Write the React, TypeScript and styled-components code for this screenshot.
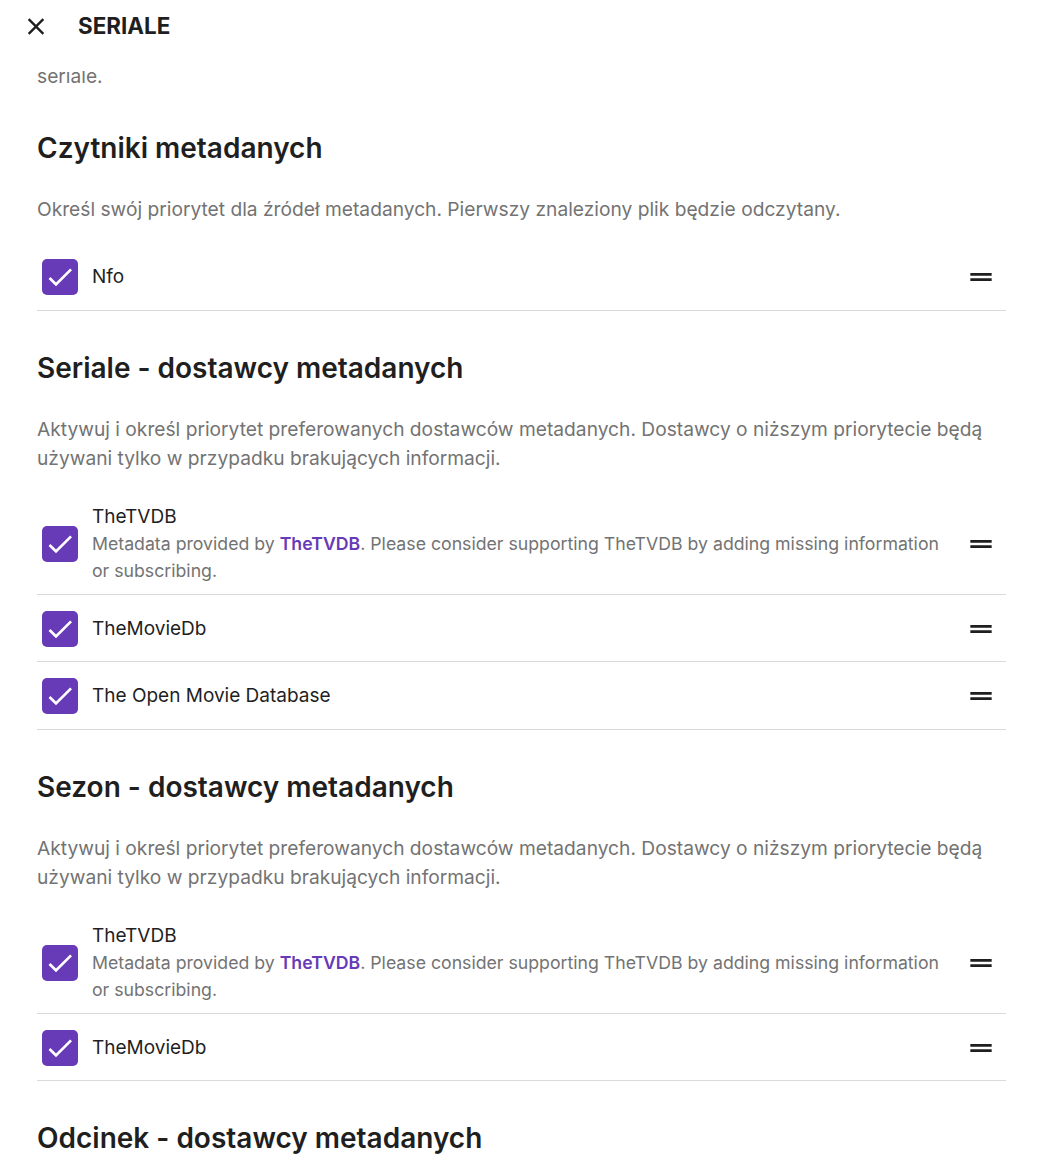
import React from "react";
import styled, { createGlobalStyle } from "styled-components";

const Global = createGlobalStyle`
  html, body { margin: 0; padding: 0; background: #ffffff; }
  body { font-family: Inter, "Noto Sans", "Liberation Sans", sans-serif; color: #1f1f1f; }
  * { box-sizing: border-box; }
`;

const Page = styled.div`
  height: 100vh;
  display: flex;
  flex-direction: column;
  overflow: hidden;
  background: #fff;
`;

const Header = styled.header`
  flex: 0 0 71px;
  display: flex;
  align-items: flex-start;
  padding: 12px 0 0 22px;
  background: #fff;
`;

const CloseButton = styled.button`
  width: 28px;
  height: 28px;
  padding: 0;
  border: 0;
  background: none;
  display: flex;
  align-items: center;
  justify-content: center;
  color: #1f1f1f;
  cursor: pointer;
`;

const Title = styled.h1`
  margin: 0 0 0 28px;
  font-size: 22.4px;
  line-height: 28px;
  font-weight: 700;
  color: #1f1f1f;
`;

const Scroller = styled.main`
  flex: 1;
  overflow: hidden;
  padding: 0 36px 0 37px;
`;

const Intro = styled.p`
  margin: -9px 0 0;
  font-size: 19.2px;
  line-height: 29px;
  color: #737373;
`;

const Section = styled.section`
  margin-top: 40px;
`;

const SectionTitle = styled.h2`
  margin: 0;
  font-size: 28px;
  line-height: 34px;
  font-weight: 600;
  color: #1f1f1f;
`;

const Description = styled.p`
  margin: 30px 0 19px;
  font-size: 19.2px;
  line-height: 29px;
  color: #737373;
`;

const List = styled.div`
  display: flex;
  flex-direction: column;
`;

const Row = styled.div`
  display: flex;
  align-items: center;
  min-height: 67.5px;
  padding: 12px 9px 10px 5px;
  border-bottom: 1px solid #dadada;
`;

const Box = styled.span`
  flex: 0 0 36px;
  width: 36px;
  height: 36px;
  border-radius: 5px;
  background: #673ab7;
  display: flex;
  align-items: center;
  justify-content: center;
`;

const Body = styled.div`
  flex: 1;
  margin-left: 14px;
  min-width: 0;
  padding-right: 20px;
`;

const Name = styled.div`
  font-size: 19px;
  line-height: 26px;
  color: #1f1f1f;
`;

const Note = styled.div`
  font-size: 17.7px;
  line-height: 27px;
  color: #737373;
`;

const Link = styled.a`
  color: #673ab7;
  font-weight: 600;
  text-decoration: none;
`;

const Handle = styled.span`
  flex: 0 0 32px;
  display: flex;
  color: #1f1f1f;
`;

const CheckIcon = () => (
  <svg width="32" height="32" viewBox="0 0 24 24" aria-hidden="true">
    <path d="M9 16.17 4.83 12l-1.42 1.41L9 19 21 7l-1.41-1.41z" fill="#fff" />
  </svg>
);

const DragIcon = () => (
  <svg width="32" height="32" viewBox="0 0 24 24" aria-hidden="true">
    <path d="M20 9H4v2h16V9zM4 15h16v-2H4v2z" fill="currentColor" />
  </svg>
);

const CloseIcon = () => (
  <svg width="29" height="29" viewBox="0 0 24 24" aria-hidden="true">
    <path
      d="M19 6.41 17.59 5 12 10.59 6.41 5 5 6.41 10.59 12 5 17.59 6.41 19 12 13.41 17.59 19 19 17.59 13.41 12z"
      fill="currentColor"
    />
  </svg>
);

type Provider = { name: string; tvdb?: boolean };

const ProviderRow = ({ name, tvdb }: Provider) => (
  <Row>
    <Box>
      <CheckIcon />
    </Box>
    <Body>
      <Name>{name}</Name>
      {tvdb && (
        <Note>
          Metadata provided by <Link href="#">TheTVDB</Link>. Please consider supporting TheTVDB by adding missing
          information or subscribing.
        </Note>
      )}
    </Body>
    <Handle>
      <DragIcon />
    </Handle>
  </Row>
);

const providerDesc =
  "Aktywuj i określ priorytet preferowanych dostawców metadanych. Dostawcy o niższym priorytecie będą używani tylko w przypadku brakujących informacji.";

export default function App() {
  return (
    <Page>
      <Global />
      <Header>
        <CloseButton aria-label="Zamknij">
          <CloseIcon />
        </CloseButton>
        <Title>SERIALE</Title>
      </Header>
      <Scroller>
        <Intro>seriale.</Intro>

        <Section>
          <SectionTitle>Czytniki metadanych</SectionTitle>
          <Description>
            Określ swój priorytet dla źródeł metadanych. Pierwszy znaleziony plik będzie odczytany.
          </Description>
          <List>
            <ProviderRow name="Nfo" />
          </List>
        </Section>

        <Section>
          <SectionTitle>Seriale - dostawcy metadanych</SectionTitle>
          <Description>{providerDesc}</Description>
          <List>
            <ProviderRow name="TheTVDB" tvdb />
            <ProviderRow name="TheMovieDb" />
            <ProviderRow name="The Open Movie Database" />
          </List>
        </Section>

        <Section>
          <SectionTitle>Sezon - dostawcy metadanych</SectionTitle>
          <Description>{providerDesc}</Description>
          <List>
            <ProviderRow name="TheTVDB" tvdb />
            <ProviderRow name="TheMovieDb" />
          </List>
        </Section>

        <Section>
          <SectionTitle>Odcinek - dostawcy metadanych</SectionTitle>
          <Description>{providerDesc}</Description>
        </Section>
      </Scroller>
    </Page>
  );
}
